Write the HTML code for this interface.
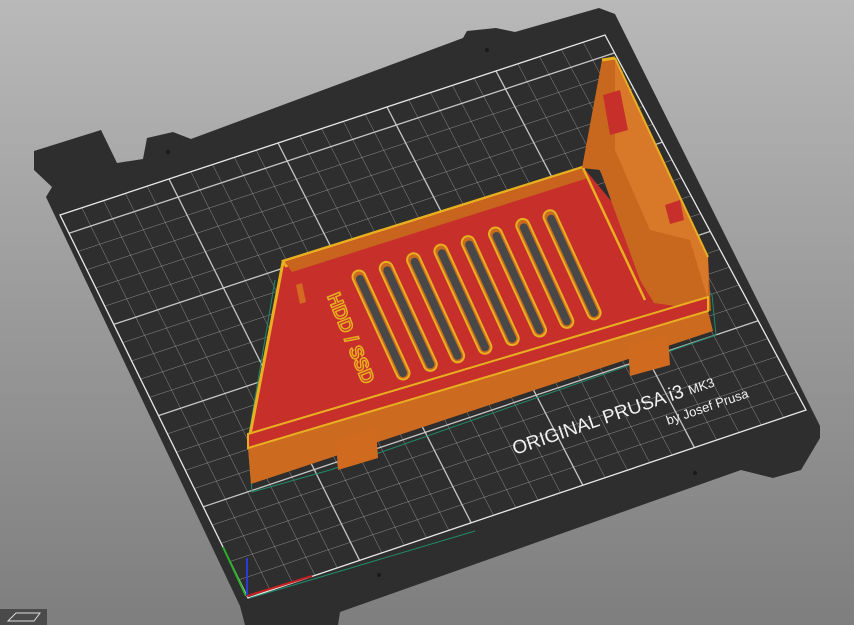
<!DOCTYPE html>
<html><head><meta charset="utf-8"><style>
html,body{margin:0;padding:0;width:854px;height:625px;overflow:hidden;background:linear-gradient(180deg,#b9b9b9 0%,#9a9a9a 50%,#7e7e7e 100%);}
svg{display:block}
</style></head><body>
<svg id="s" width="854" height="625" viewBox="0 0 854 625" xmlns="http://www.w3.org/2000/svg" font-family="Liberation Sans, sans-serif">
<polygon fill="#2e2e2f" points="34,151 101,130 117,163 143,159 147,138 173,132 191,139 463,38 467,31 496,28 515,32 599,8 615,14 820,426 820,438 801,470 773,478 741,470 340,612 338,625 245,625 240,606 46,197 52,187 34,170"/>
<g id="grid" stroke="#cfcfcf" fill="none"></g>
<polygon fill="none" stroke="#e8e8e8" stroke-width="1.3" points="60,215 605,35 806,410 248,598"/>
<g fill="#1a1a1a"><circle cx="168" cy="152" r="2"/><circle cx="487" cy="50" r="2"/><circle cx="695" cy="473" r="2"/><circle cx="379" cy="575" r="2"/></g>
<polyline fill="none" stroke="#1f8a6a" stroke-width="1" points="275,280 248,440 252,492 330,470 716,335 712,295 600,140"/>
<line x1="250" y1="598" x2="475" y2="531" stroke="#1f8a6a" stroke-width="1"/>
<polygon fill="#c7302a" points="283,261 583,167 692,299 708,303 248,440"/>
<polygon fill="none" stroke="#e8b020" stroke-width="2.5" points="283,261 583,167 583,172 286,266"/>
<line x1="283" y1="262" x2="249" y2="440" stroke="#e8b020" stroke-width="3"/>
<polygon fill="#c8641e" points="285,262 583,168 588,178 292,272"/>
<polygon fill="#d36a20" points="296,285 302,283 306,302 300,304"/>
<g id="slots" stroke-linecap="round"></g>
<polygon fill="#c8681f" points="582,168 602,60 615,58 708,257 711,311 654,303 640,280 600,170"/>
<polygon fill="#d8792a" points="615,60 708,257 708,300 690,240 650,230 615,150"/>
<polygon fill="#c7302a" points="603,95 620,90 628,130 610,135"/>
<polygon fill="#c7302a" points="665,205 680,200 684,220 670,224"/>
<line x1="602" y1="60" x2="615" y2="58" stroke="#e8b020" stroke-width="3"/>
<line x1="615" y1="58" x2="708" y2="257" stroke="#e8b020" stroke-width="2"/>
<line x1="583" y1="168" x2="645" y2="300" stroke="#e8b020" stroke-width="2.5"/>
<polygon fill="#cc6a1f" points="248,448 708,311 713,331 251,484"/>
<polygon fill="#c7302a" points="248,434 708,297 708,311 248,448"/>
<polygon fill="none" stroke="#e8b020" stroke-width="2" points="248,434 708,297 708,311 248,448"/>
<polygon fill="#d06a1f" points="336,440 376,428 378,458 338,470"/>
<polygon fill="#d06a1f" points="628,345 668,335 670,365 630,376"/>
<text x="0" y="0" transform="translate(327,296) rotate(68)" font-size="19" font-weight="bold" fill="#c7302a" stroke="#e8b020" stroke-width="1.5">HDD / SSD</text>
<text transform="translate(515,455) rotate(-19)" font-size="19" fill="#f2f2f2">ORIGINAL PRUSA i3 <tspan font-size="13">MK3</tspan></text>
<text transform="translate(668,425) rotate(-19)" font-size="13" fill="#f2f2f2">by Josef Prusa</text>
<line x1="246" y1="596" x2="223" y2="547" stroke="#2bb02b" stroke-width="2"/>
<line x1="247" y1="596" x2="247" y2="558" stroke="#2a3cd8" stroke-width="2"/>
<line x1="247" y1="596" x2="312" y2="576" stroke="#c82020" stroke-width="2"/>
<rect x="0" y="609" width="47" height="16" fill="#4a4a4a"/>
<polygon points="8,621 16,613 40,613 34,621" fill="none" stroke="#ddd" stroke-width="1"/>
</svg>
<script>
var TL=[60,215],TR=[605,35],BR=[806,410],BL=[248,598];
function P(u,v){var x=(1-u)*(1-v)*TL[0]+u*(1-v)*TR[0]+u*v*BR[0]+(1-u)*v*BL[0];var y=(1-u)*(1-v)*TL[1]+u*(1-v)*TR[1]+u*v*BR[1]+(1-u)*v*BL[1];return [x,y];}
var g=document.getElementById('grid'),h='';
for(var i=1;i<25;i++){var u=i/25,a=P(u,0),b=P(u,1);h+='<line x1="'+a[0]+'" y1="'+a[1]+'" x2="'+b[0]+'" y2="'+b[1]+'" stroke-width="'+(i%5==0?1.3:0.5)+'" opacity="'+(i%5==0?0.95:0.6)+'"/>';}
for(var j=1;j<21;j++){var v=j/21,a=P(0,v),b=P(1,v);h+='<line x1="'+a[0]+'" y1="'+a[1]+'" x2="'+b[0]+'" y2="'+b[1]+'" stroke-width="'+(j%5==1?1.3:0.5)+'" opacity="'+(j%5==1?0.95:0.6)+'"/>';}
g.innerHTML=h;
var s=document.getElementById('slots'),t='';
for(var k=0;k<8;k++){var x1=359+27.3*k,y1=277-8.6*k,x2=403+27.3*k,y2=373-8.6*k;
t+='<line x1="'+x1+'" y1="'+y1+'" x2="'+x2+'" y2="'+y2+'" stroke="#e8b020" stroke-width="15"/>';
t+='<line x1="'+x1+'" y1="'+y1+'" x2="'+x2+'" y2="'+y2+'" stroke="#c96a1f" stroke-width="11"/>';
t+='<line x1="'+(x1+1)+'" y1="'+(y1+2)+'" x2="'+x2+'" y2="'+y2+'" stroke="#484848" stroke-width="8"/>';}
s.innerHTML=t;
</script>
</body></html>
